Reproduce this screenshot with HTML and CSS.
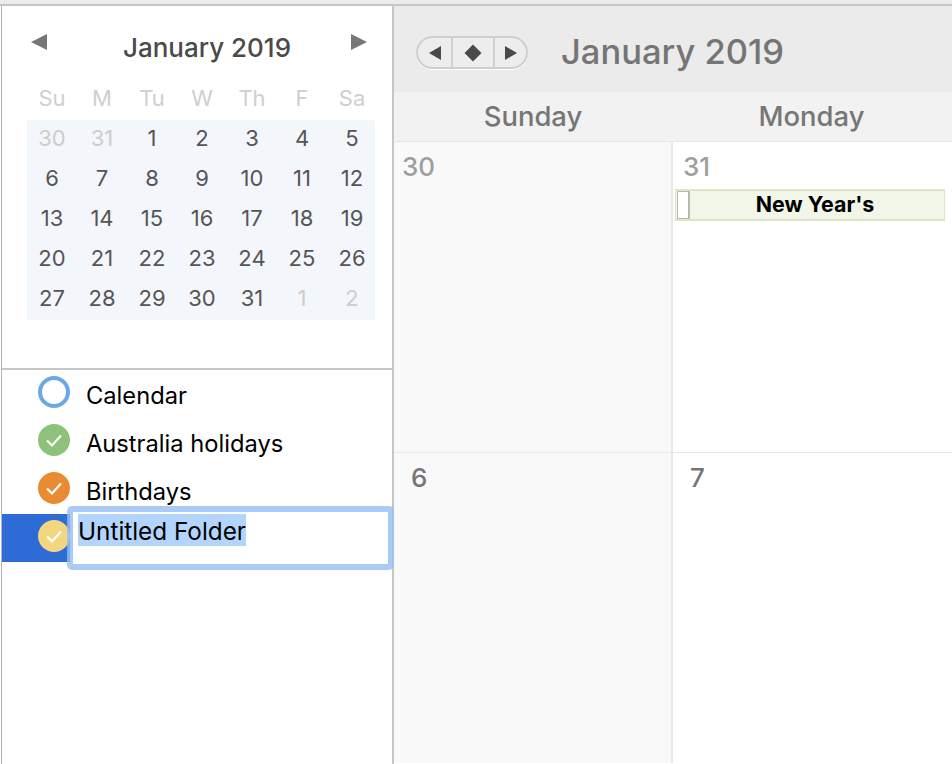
FILE: index.html
```html
<!DOCTYPE html>
<html>
<head>
  <title>Calendar</title>
  <meta name="viewport" content="width=device-width, initial-scale=1.0">
  <link rel="stylesheet" href="styles.css">
</head>
<body>
  <div class="app">
    <!-- Left column: mini month and calendar list -->
    <div class="sidebar">
      <div class="mini">
        <div class="mini-nav">
          <span class="tri tri-left"></span>
          <span class="mini-title">January 2019</span>
          <span class="tri tri-right"></span>
        </div>
        <div class="mini-heads">
          <span>Su</span><span>M</span><span>Tu</span><span>W</span><span>Th</span><span>F</span><span>Sa</span>
        </div>
        <div class="mini-days">
          <span class="off">30</span><span class="off">31</span><span>1</span><span>2</span><span>3</span><span>4</span><span>5</span>
          <span>6</span><span>7</span><span>8</span><span>9</span><span>10</span><span>11</span><span>12</span>
          <span>13</span><span>14</span><span>15</span><span>16</span><span>17</span><span>18</span><span>19</span>
          <span>20</span><span>21</span><span>22</span><span>23</span><span>24</span><span>25</span><span>26</span>
          <span>27</span><span>28</span><span>29</span><span>30</span><span>31</span><span class="off">1</span><span class="off">2</span>
        </div>
      </div>
      <div class="cal-list">
        <div class="cal-row">
          <span class="dot dot-blue"></span>
          <span class="cal-name">Calendar</span>
        </div>
        <div class="cal-row">
          <span class="dot dot-green"><svg viewBox="0 0 32 32"><path d="M9 16.5l5 5 9-10"/></svg></span>
          <span class="cal-name">Australia holidays</span>
        </div>
        <div class="cal-row">
          <span class="dot dot-orange"><svg viewBox="0 0 32 32"><path d="M9 16.5l5 5 9-10"/></svg></span>
          <span class="cal-name">Birthdays</span>
        </div>
        <div class="cal-row cal-row-selected">
          <span class="dot dot-yellow"><svg viewBox="0 0 32 32"><path d="M9 16.5l5 5 9-10"/></svg></span>
          <div class="rename"><span class="rename-text">Untitled Folder</span></div>
        </div>
      </div>
    </div>

    <!-- Right column: month view -->
    <div class="month">
      <div class="toolbar">
        <div class="pager">
          <div class="pager-btn pager-prev"><span class="tri-dark tri-dark-left"></span></div>
          <div class="pager-btn pager-today"><span class="diamond"></span></div>
          <div class="pager-btn pager-next"><span class="tri-dark tri-dark-right"></span></div>
        </div>
        <div class="toolbar-title">January 2019</div>
      </div>
      <div class="weekdays">
        <div>Sunday</div>
        <div>Monday</div>
      </div>
      <div class="grid">
        <div class="cell cell-weekend">
          <div class="date date-off">30</div>
        </div>
        <div class="cell">
          <div class="date date-off">31</div>
          <div class="event">
            <span class="event-check"></span>
            <span class="event-name">New Year's</span>
          </div>
        </div>
        <div class="cell cell-weekend">
          <div class="date date-in">6</div>
        </div>
        <div class="cell">
          <div class="date date-in">7</div>
        </div>
      </div>
    </div>
  </div>
</body>
</html>
```

FILE: styles.css
```css
html, body {
  margin: 0;
  height: 100%;
  overflow: hidden;
}
body {
  font-family: Inter, "Noto Sans", Arial, sans-serif;
  background-color: #ececec;
}
.app {
  display: flex;
  height: 759px;
  margin-top: 4px;
  border-top: 2px solid #c6c6c6;
  background-color: #fff;
}
.sidebar {
  width: 390px;
  margin-left: 1px;
  border-left: 1px solid #b4b4b4;
  flex-shrink: 0;
  background-color: #fff;
}
.mini {
  height: 364px;
  border-bottom: 2px solid #c6c6c6;
  padding-left: 25px;
  box-sizing: border-box;
}
.mini-nav {
  display: flex;
  align-items: center;
  justify-content: space-between;
  width: 340px;
  height: 74px;
  padding-left: 4px;
  padding-bottom: 2px;
  box-sizing: border-box;
}
.mini-title {
  font-size: 26px;
  font-weight: 500;
  color: #4a4a4a;
  padding-top: 10px;
  margin-left: 16px;
}
.tri {
  width: 0;
  height: 0;
  border-top: 8px solid transparent;
  border-bottom: 8px solid transparent;
}
.tri-left {
  border-right: 16px solid #777;
}
.tri-right {
  border-left: 16px solid #777;
}
.mini-heads, .mini-days {
  display: grid;
  grid-template-columns: repeat(7, 50px);
  width: 348px;
  text-align: center;
  font-size: 22px;
}
.mini-heads {
  height: 40px;
  line-height: 37px;
  color: #cfcfcf;
}
.mini-days {
  grid-auto-rows: 40px;
  line-height: 37px;
  background-color: #f3f6fa;
  color: #555;
}
.mini-days .off {
  color: #cdcdcd;
}

.cal-row {
  display: flex;
  align-items: center;
  height: 48px;
  padding-left: 36px;
  position: relative;
}
.cal-row-selected {
  background: linear-gradient(#2e6bd6, #2e6bd6) no-repeat left / 68px 100%;
}
.dot {
  width: 32px;
  height: 32px;
  margin-bottom: 4px;
  border-radius: 50%;
  box-sizing: border-box;
  flex-shrink: 0;
}
.dot svg {
  display: block;
  width: 32px;
  height: 32px;
  fill: none;
  stroke: #fff;
  stroke-width: 2.2;
}
.dot-blue {
  border: 4px solid #6ea7e8;
}
.dot-green {
  background-color: #90c17c;
}
.dot-orange {
  background-color: #e88b33;
}
.dot-yellow {
  background-color: #f3d67f;
}
.cal-name {
  margin-left: 16px;
  font-size: 23.7px;
  color: #000;
  padding-top: 2px;
}
.rename {
  position: absolute;
  left: 65px;
  top: -8px;
  width: 327px;
  height: 64px;
  box-sizing: border-box;
  border: 6px solid rgba(150, 190, 245, 0.8);
  border-radius: 5px;
  background-color: #fff;
  background-clip: padding-box;
  padding-left: 5px;
  line-height: 35px;
  font-size: 24.3px;
  color: #000;
}
.rename-text {
  display: inline-block;
  background-color: #b3d4fd;
  height: 32px;
  margin-top: 2px;
}

.month {
  flex: 1;
  border-left: 2px solid #c6c6c6;
}
.toolbar {
  display: flex;
  align-items: center;
  height: 86px;
  background-color: #ebebeb;
  padding-left: 22px;
}
.pager {
  display: flex;
  width: 112px;
  height: 33px;
  box-sizing: border-box;
  border: 2px solid #cfcfcf;
  border-radius: 17px;
  background-color: #ededed;
  box-shadow: 0 1px 0 #fff;
  overflow: hidden;
  margin-top: 7px;
}
.pager-btn {
  display: flex;
  align-items: center;
  justify-content: center;
}
.pager-prev {
  width: 35px;
  box-sizing: border-box;
  border-right: 2px solid #cfcfcf;
}
.pager-today {
  width: 40px;
  border-right: 2px solid #cfcfcf;
}
.pager-next {
  flex: 1;
}
.tri-dark {
  width: 0;
  height: 0;
  border-top: 7.5px solid transparent;
  border-bottom: 7.5px solid transparent;
}
.tri-dark-left {
  border-right: 12px solid #4a4a4a;
}
.tri-dark-right {
  border-left: 12px solid #4a4a4a;
}
.diamond {
  width: 12px;
  height: 12px;
  background-color: #4a4a4a;
  transform: rotate(45deg);
}
.toolbar-title {
  margin-left: 33px;
  margin-top: 5px;
  font-size: 34.5px;
  font-weight: 500;
  color: #757575;
}
.weekdays {
  display: grid;
  grid-template-columns: 278px 279px;
  height: 49px;
  line-height: 48px;
  background-color: #f2f2f2;
  text-align: center;
  font-size: 27.4px;
  font-weight: 500;
  color: #767676;
}
.grid {
  display: grid;
  grid-template-columns: 279px 279px;
  grid-template-rows: 311px 1fr;
  height: 622px;
}
.cell {
  box-sizing: border-box;
  border-top: 1px solid #e8e8e8;
  background-color: #fff;
}
.cell-weekend {
  background-color: #f9f9f9;
  border-right: 2px solid #e8e8e8;
}
.date {
  font-size: 26px;
  font-weight: 500;
  line-height: 32px;
  margin-top: 9px;
}
.date-off {
  color: #9e9e9e;
  padding-left: 9px;
}
.date-in {
  color: #757575;
  padding-left: 17px;
}
.cell-weekend .date-off {
  padding-left: 8px;
}
.cell:nth-child(even) .date-off {
  padding-left: 10px;
}
.event {
  display: flex;
  align-items: center;
  height: 32px;
  width: 270px;
  margin-left: 2px;
  margin-top: 6px;
  box-sizing: border-box;
  border: 1px solid #dde6c4;
  border-width: 2px 1px;
  background-color: #f2f6e8;
}
.event-check {
  width: 13px;
  height: 28px;
  box-sizing: border-box;
  margin-left: 1px;
  border: 1px solid #b8bba8;
  border-right-width: 2px;
  background-color: #fff;
}
.event-name {
  flex: 1;
  text-align: center;
  font-size: 21.4px;
  font-weight: 700;
  line-height: 26px;
  padding-bottom: 2px;
  color: #000;
  padding-right: 4px;
}
```
